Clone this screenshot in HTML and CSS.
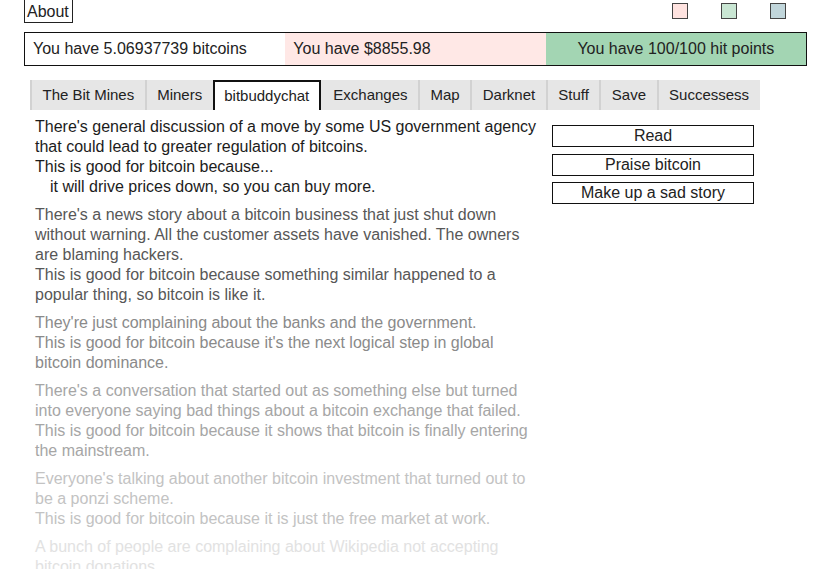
FILE: index.html
```html
<!DOCTYPE html>
<html>
<head>
<meta charset="utf-8">
<link rel="stylesheet" href="styles.css">
</head>
<body>
<div class="page">
  <div class="topbar">
    <div class="about">About</div>
    <div class="swatches">
      <span class="swatch swatch-pink"></span>
      <span class="swatch swatch-green"></span>
      <span class="swatch swatch-blue"></span>
    </div>
  </div>
  <div class="status">
    <div class="cell cell-coins">You have 5.06937739 bitcoins</div>
    <div class="cell cell-money">You have $8855.98</div>
    <div class="cell cell-hp">You have 100/100 hit points</div>
  </div>
  <div class="tabs">
    <div class="tab">The Bit Mines</div>
    <div class="tab">Miners</div>
    <div class="tab active">bitbuddychat</div>
    <div class="tab">Exchanges</div>
    <div class="tab">Map</div>
    <div class="tab">Darknet</div>
    <div class="tab">Stuff</div>
    <div class="tab">Save</div>
    <div class="tab">Successess</div>
  </div>
  <div class="main">
    <div class="feed">
      <div class="post p1">
        There's general discussion of a move by some US government agency that could lead to greater regulation of bitcoins.<br>
        This is good for bitcoin because...
        <div class="reply">it will drive prices down, so you can buy more.</div>
      </div>
      <div class="post p2">
        There's a news story about a bitcoin business that just shut down without warning. All the customer assets have vanished. The owners are blaming hackers.<br>
        This is good for bitcoin because something similar happened to a popular thing, so bitcoin is like it.
      </div>
      <div class="post p3">
        They're just complaining about the banks and the government.<br>
        This is good for bitcoin because it's the next logical step in global bitcoin dominance.
      </div>
      <div class="post p4">
        There's a conversation that started out as something else but turned into everyone saying bad things about a bitcoin exchange that failed.<br>
        This is good for bitcoin because it shows that bitcoin is finally entering the mainstream.
      </div>
      <div class="post p5">
        Everyone's talking about another bitcoin investment that turned out to be a ponzi scheme.<br>
        This is good for bitcoin because it is just the free market at work.
      </div>
      <div class="post p6">
        A bunch of people are complaining about Wikipedia not accepting bitcoin donations.<br>
        This is good for bitcoin because it means bitcoin is being noticed.
      </div>
    </div>
    <div class="actions">
      <button class="btn">Read</button>
      <button class="btn">Praise bitcoin</button>
      <button class="btn">Make up a sad story</button>
    </div>
  </div>
</div>
</body>
</html>
```

FILE: styles.css
```css
html, body {
  margin: 0;
  padding: 0;
  background: #fff;
  overflow: hidden;
}
body {
  font-family: "Liberation Sans", Arial, sans-serif;
  font-size: 16px;
  color: #222;
}
.page {
  padding: 0 10px 0 24px;
}
.topbar {
  display: flex;
  justify-content: space-between;
  align-items: flex-start;
}
.about {
  border: 1px solid #222;
  border-top: none;
  padding: 3px 3px 1px 2px;
  line-height: 18px;
}
.swatches {
  display: flex;
  gap: 33px;
  margin-top: 3px;
  margin-right: 21px;
}
.swatch {
  display: block;
  width: 14px;
  height: 14px;
  border: 1px solid #444;
}
.swatch-pink { background: #ffe3e0; }
.swatch-green { background: #c9e6d3; }
.swatch-blue { background: #c1d6db; }
.status {
  margin-top: 9px;
  border: 1px solid #111;
  display: grid;
  grid-template-columns: 1fr 1fr 1fr;
}
.cell {
  height: 32px;
  line-height: 32px;
  padding-left: 8px;
  white-space: nowrap;
}
.cell-coins { background: #fff; }
.cell-money { background: #ffe8e6; }
.cell-hp {
  background: #a3d5b3;
  text-align: center;
  padding-left: 0;
}
.tabs {
  display: flex;
  margin-top: 14px;
  margin-left: 6px;
}
.tab {
  background: #e6e6e6;
  font-size: 15px;
  height: 30px;
  line-height: 30px;
  padding: 0 10.5px;
  border-left: 2px solid #d2d2d2;
  box-sizing: border-box;
}
.tab.active {
  background: #fff;
  border: 2px solid #111;
  border-bottom: none;
  line-height: 28px;
  padding: 0 9.5px;
}
.tab.active + .tab {
  border-left-color: #e6e6e6;
}
.main {
  display: flex;
  align-items: flex-start;
  margin-top: 7px;
  margin-left: 11px;
}
.feed {
  width: 506px;
  line-height: 20px;
}
.post {
  margin-bottom: 8px;
}
.reply {
  padding-left: 15px;
}
.p1 { color: #1c1c1c; }
.p2 { color: #575757; }
.p3 { color: #8a8a8a; }
.p4 { color: #a6a6a6; }
.p5 { color: #c3c3c3; }
.p6 { color: #e2e2e2; }
.actions {
  margin-left: 11px;
  margin-top: 8px;
  display: flex;
  flex-direction: column;
  gap: 6.5px;
}
.btn {
  width: 202px;
  height: 22px;
  border: 1px solid #111;
  background: #fff;
  font-family: "Liberation Sans", Arial, sans-serif;
  font-size: 16px;
  line-height: 20px;
  color: #222;
  padding: 0;
  margin: 0;
}
```
